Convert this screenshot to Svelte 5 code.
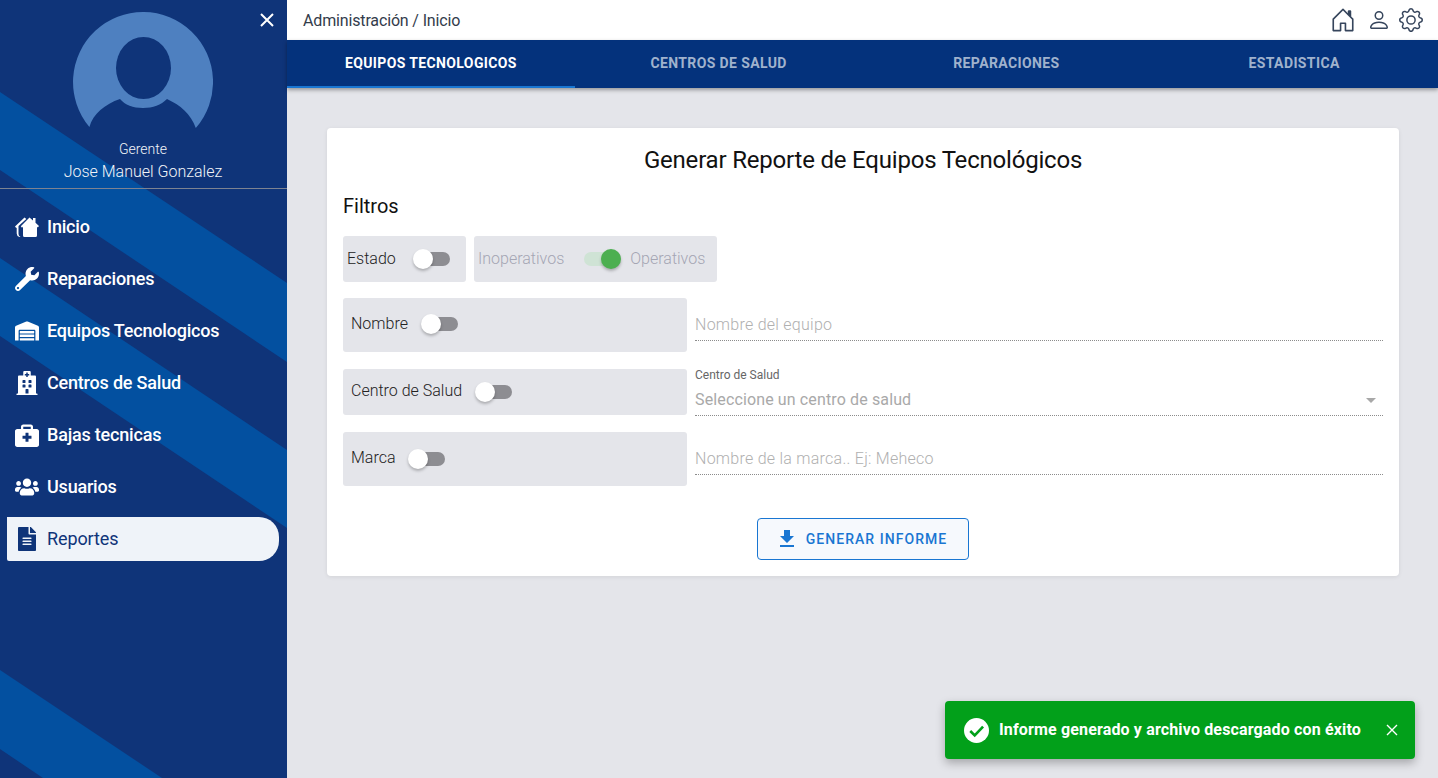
<script>
  const menu = [
    { label: 'Inicio', icon: 'home' },
    { label: 'Reparaciones', icon: 'wrench' },
    { label: 'Equipos Tecnologicos', icon: 'warehouse' },
    { label: 'Centros de Salud', icon: 'hospital' },
    { label: 'Bajas tecnicas', icon: 'medical' },
    { label: 'Usuarios', icon: 'users' },
    { label: 'Reportes', icon: 'file', active: true }
  ];

  const icons = {
    wrench: { box: '0 0 512 512', d: 'M507.73 109.1c-2.24-9.03-13.54-12.09-20.12-5.51l-74.36 74.36-67.88-11.31-11.31-67.88 74.36-74.36c6.62-6.62 3.43-17.9-5.66-20.16-47.38-11.74-99.55.91-136.58 37.93-39.64 39.64-50.55 97.1-34.05 147.2L18.74 402.76c-24.99 24.99-24.99 65.51 0 90.5 24.99 24.99 65.51 24.99 90.5 0l213.21-213.21c50.12 16.71 107.47 5.68 147.37-34.22 37.07-37.07 49.7-89.32 37.91-136.73zM64 472c-13.25 0-24-10.75-24-24 0-13.26 10.75-24 24-24s24 10.74 24 24c0 13.25-10.75 24-24 24z' },
    warehouse: { box: '0 0 640 512', d: 'M504 352H136.4c-4.4 0-8 3.6-8 8l-.1 48c0 4.4 3.6 8 8 8H504c4.4 0 8-3.6 8-8v-48c0-4.4-3.6-8-8-8zm0 96H136.1c-4.4 0-8 3.6-8 8l-.1 48c0 4.4 3.6 8 8 8h368c4.4 0 8-3.6 8-8v-48c0-4.4-3.6-8-8-8zm0-192H136.6c-4.4 0-8 3.6-8 8l-.1 48c0 4.4 3.6 8 8 8H504c4.4 0 8-3.6 8-8v-48c0-4.4-3.6-8-8-8zm106.5-139L338.4 3.7a48.15 48.15 0 0 0-36.9 0L29.5 117C11.7 124.5 0 141.9 0 161.3V504c0 4.4 3.6 8 8 8h80c4.4 0 8-3.6 8-8V256c0-17.6 14.6-32 32.6-32h382.8c18 0 32.6 14.4 32.6 32v248c0 4.4 3.6 8 8 8h80c4.4 0 8-3.6 8-8V161.3c0-19.4-11.7-36.8-29.5-44.3z' },
    hospital: { box: '0 0 448 512', d: 'M448 492v20H0v-20c0-6.627 5.373-12 12-12h20V120c0-13.255 10.745-24 24-24h88V24c0-13.255 10.745-24 24-24h112c13.255 0 24 10.745 24 24v72h88c13.255 0 24 10.745 24 24v360h20c6.627 0 12 5.373 12 12zM308 192h-40c-6.627 0-12 5.373-12 12v40c0 6.627 5.373 12 12 12h40c6.627 0 12-5.373 12-12v-40c0-6.627-5.373-12-12-12zm-168 64h40c6.627 0 12-5.373 12-12v-40c0-6.627-5.373-12-12-12h-40c-6.627 0-12 5.373-12 12v40c0 6.627 5.373 12 12 12zm104 128h-40c-6.627 0-12 5.373-12 12v84h64v-84c0-6.627-5.373-12-12-12zm64-96h-40c-6.627 0-12 5.373-12 12v40c0 6.627 5.373 12 12 12h40c6.627 0 12-5.373 12-12v-40c0-6.627-5.373-12-12-12zm-116 12c0-6.627-5.373-12-12-12h-40c-6.627 0-12 5.373-12 12v40c0 6.627 5.373 12 12 12h40c6.627 0 12-5.373 12-12v-40zM182 96h26v26a6 6 0 0 0 6 6h20a6 6 0 0 0 6-6V96h26a6 6 0 0 0 6-6V70a6 6 0 0 0-6-6h-26V38a6 6 0 0 0-6-6h-20a6 6 0 0 0-6 6v26h-26a6 6 0 0 0-6 6v20a6 6 0 0 0 6 6z' },
    medical: { box: '0 0 512 512', d: 'M464 128h-80V80c0-26.5-21.5-48-48-48H176c-26.5 0-48 21.5-48 48v48H48c-26.5 0-48 21.5-48 48v288c0 26.5 21.5 48 48 48h416c26.5 0 48-21.5 48-48V176c0-26.5-21.5-48-48-48zM176 80h160v48H176V80zm176 248c0 4.4-3.6 8-8 8h-56v56c0 4.4-3.6 8-8 8h-48c-4.4 0-8-3.6-8-8v-56h-56c-4.4 0-8-3.6-8-8v-48c0-4.4 3.6-8 8-8h56v-56c0-4.4 3.6-8 8-8h48c4.4 0 8 3.6 8 8v56h56c4.4 0 8 3.6 8 8v48z' },
    users: { box: '0 0 640 512', d: 'M96 224c35.3 0 64-28.7 64-64s-28.7-64-64-64-64 28.7-64 64 28.7 64 64 64zm448 0c35.3 0 64-28.7 64-64s-28.7-64-64-64-64 28.7-64 64 28.7 64 64 64zm32 32h-64c-17.6 0-33.5 7.1-45.1 18.6 40.3 22.1 68.9 62 75.1 109.4h66c17.7 0 32-14.3 32-32v-32c0-35.3-28.7-64-64-64zm-256 0c61.9 0 112-50.1 112-112S381.9 32 320 32 208 82.1 208 144s50.1 112 112 112zm76.8 32h-8.3c-20.8 10-43.9 16-68.5 16s-47.6-6-68.5-16h-8.3C179.6 288 128 339.6 128 403.2V432c0 26.5 21.5 48 48 48h288c26.5 0 48-21.5 48-48v-28.8c0-63.6-51.6-115.2-115.2-115.2zm-223.7-13.4C161.5 263.1 145.6 256 128 256H64c-35.3 0-64 28.7-64 64v32c0 17.7 14.3 32 32 32h65.9c6.3-47.4 34.9-87.3 75.2-109.4z' },
    file: { box: '0 0 384 512', d: 'M224 136V0H24C10.7 0 0 10.7 0 24v464c0 13.3 10.7 24 24 24h336c13.3 0 24-10.7 24-24V160H248c-13.2 0-24-10.8-24-24zm64 236c0 6.6-5.4 12-12 12H108c-6.6 0-12-5.4-12-12v-8c0-6.6 5.4-12 12-12h168c6.6 0 12 5.4 12 12v8zm0-64c0 6.6-5.4 12-12 12H108c-6.6 0-12-5.4-12-12v-8c0-6.6 5.4-12 12-12h168c6.6 0 12 5.4 12 12v8zm0-72v8c0 6.6-5.4 12-12 12H108c-6.6 0-12-5.4-12-12v-8c0-6.6 5.4-12 12-12h168c6.6 0 12 5.4 12 12zm96-114.1v6.1H256V0h6.1c6.4 0 12.5 2.5 17 7l97.9 98c4.5 4.5 7 10.6 7 16.9z' },
    home: { box: '0 0 24 22', d: 'M14.5 1.500 18 4.600V2H20.500V6.800L24 10 22.800 11.500 22 10.800V19.500Q22 21 20.500 21H9.500Q8 21 8 19.500V10.800L7 11.800 5.800 10.300ZM9.500 1.500 11.300 3 3.500 10V18Q3.500 20 5.500 21H4.500Q1.700 20 1.700 17.500V11.500L1.200 12 0 10.500Z' }
  };

  const tabs = ['Equipos Tecnologicos', 'Centros de Salud', 'Reparaciones', 'Estadistica'];
</script>

<div class="layout">
  <aside class="sidebar">
    <svg class="stripes" viewBox="0 0 287 778" aria-hidden="true">
      <path d="M0 92 287 283V362L0 170Z" />
      <path d="M0 258 287 450V528L0 336Z" />
      <path d="M0 670 162 778H43L0 749Z" />
    </svg>

    <button class="close" aria-label="Cerrar">
      <svg viewBox="0 0 16 16"><path d="M2 2 14 14M14 2 2 14" /></svg>
    </button>

    <div class="profile">
      <svg class="avatar" viewBox="0 0 140 140">
        <path class="avatar-bg" d="M16.400 115A70 70 0 1 1 122.800 116C118 102 107 93 94 87C88 93 80 96 70 96C60 96 52 93 47 87C32 92 20 102 16.400 115Z" />
        <ellipse class="avatar-head" cx="70.500" cy="56" rx="27.500" ry="31" />
      </svg>
      <div class="role">Gerente</div>
      <div class="name">Jose Manuel Gonzalez</div>
    </div>

    <nav class="menu">
      {#each menu as item}
        <div class="menu-item" class:active={item.active}>
          <span class="menu-icon">
            <svg viewBox={icons[item.icon].box}><path d={icons[item.icon].d} /></svg>
          </span>
          <span class="menu-label">{item.label}</span>
        </div>
      {/each}
    </nav>
  </aside>

  <div class="page">
    <header class="topbar">
      <span class="crumb">Administración / Inicio</span>
      <div class="top-icons">
        <svg class="t-home" viewBox="0 0 16 16"><path d="M8.354 1.146a.5.5 0 0 0-.708 0l-6 6A.5.5 0 0 0 1.500 7.500v7a.5.5 0 0 0 .5.5h4.500a.5.5 0 0 0 .5-.5v-4h2v4a.5.5 0 0 0 .5.5H14a.5.5 0 0 0 .5-.5v-7a.5.5 0 0 0-.146-.354L13 5.793V2.500a.5.5 0 0 0-.5-.5h-1a.5.5 0 0 0-.5.5v1.293L8.354 1.146ZM2.500 14V7.707l5.500-5.500 5.500 5.500V14H10v-4a.5.5 0 0 0-.5-.5h-3a.5.5 0 0 0-.5.5v4H2.500Z" /><path d="M11 2.500h2V6L11 4Z" /></svg>
        <svg viewBox="0 0 16 16"><path d="M8 8a3 3 0 1 0 0-6 3 3 0 0 0 0 6Zm2-3a2 2 0 1 1-4 0 2 2 0 0 1 4 0Zm4 8c0 1-1 1-1 1H3s-1 0-1-1 1-4 6-4 6 3 6 4Zm-1-.004c-.001-.246-.154-.986-.832-1.664C11.516 10.680 10.289 10 8 10c-2.290 0-3.516.680-4.168 1.332-.678.678-.830 1.418-.832 1.664h10Z" /></svg>
        <svg viewBox="0 0 16 16"><path d="M8 4.754a3.246 3.246 0 1 0 0 6.492 3.246 3.246 0 0 0 0-6.492zM5.754 8a2.246 2.246 0 1 1 4.492 0 2.246 2.246 0 0 1-4.492 0z" /><path d="M9.796 1.343c-.527-1.790-3.065-1.790-3.592 0l-.094.319a.873.873 0 0 1-1.255.520l-.292-.160c-1.640-.892-3.433.902-2.540 2.541l.159.292a.873.873 0 0 1-.520 1.255l-.319.094c-1.790.527-1.790 3.065 0 3.592l.319.094a.873.873 0 0 1 .520 1.255l-.160.292c-.892 1.640.901 3.434 2.541 2.540l.292-.159a.873.873 0 0 1 1.255.520l.094.319c.527 1.790 3.065 1.790 3.592 0l.094-.319a.873.873 0 0 1 1.255-.520l.292.160c1.640.893 3.434-.902 2.540-2.541l-.159-.292a.873.873 0 0 1 .520-1.255l.319-.094c1.790-.527 1.790-3.065 0-3.592l-.319-.094a.873.873 0 0 1-.520-1.255l.160-.292c.893-1.640-.902-3.433-2.541-2.540l-.292.159a.873.873 0 0 1-1.255-.520l-.094-.319zm-2.633.283c.246-.835 1.428-.835 1.674 0l.094.319a1.873 1.873 0 0 0 2.693 1.115l.291-.160c.764-.415 1.600.420 1.184 1.185l-.159.292a1.873 1.873 0 0 0 1.116 2.692l.318.094c.835.246.835 1.428 0 1.674l-.319.094a1.873 1.873 0 0 0-1.115 2.693l.160.291c.415.764-.420 1.600-1.185 1.184l-.291-.159a1.873 1.873 0 0 0-2.693 1.116l-.094.318c-.246.835-1.428.835-1.674 0l-.094-.319a1.873 1.873 0 0 0-2.692-1.115l-.292.160c-.764.415-1.600-.420-1.184-1.185l.159-.291A1.873 1.873 0 0 0 1.945 8.930l-.319-.094c-.835-.246-.835-1.428 0-1.674l.319-.094A1.873 1.873 0 0 0 3.060 4.377l-.160-.292c-.415-.764.420-1.600 1.185-1.184l.292.159a1.873 1.873 0 0 0 2.692-1.115l.094-.319z" /></svg>
      </div>
    </header>

    <div class="tabs">
      {#each tabs as tab, i}
        <div class="tab" class:on={i === 0}>{tab}</div>
      {/each}
    </div>

    <main class="content">
      <section class="card">
        <h1>Generar Reporte de Equipos Tecnológicos</h1>
        <h2>Filtros</h2>

        <div class="state-row">
          <div class="box box-state">
            <span class="lbl">Estado</span>
            <span class="switch"><span class="track"></span><span class="thumb"></span></span>
          </div>
          <div class="box box-choice">
            <span class="lbl">Inoperativos</span>
            <span class="switch"><span class="track on"></span><span class="thumb on"></span></span>
            <span class="lbl">Operativos</span>
          </div>
        </div>

        <div class="filter filter-tall">
          <div class="box box-wide">
            <span class="lbl">Nombre</span>
            <span class="switch"><span class="track"></span><span class="thumb"></span></span>
          </div>
          <div class="field"><span class="placeholder">Nombre del equipo</span></div>
        </div>

        <div class="filter filter-short">
          <div class="box box-wide box-low">
            <span class="lbl">Centro de Salud</span>
            <span class="switch"><span class="track"></span><span class="thumb"></span></span>
          </div>
          <div class="field-select">
            <span class="small-label">Centro de Salud</span>
            <div class="select-value">
              <span class="placeholder">Seleccione un centro de salud</span>
              <span class="caret"></span>
            </div>
          </div>
        </div>

        <div class="filter filter-tall">
          <div class="box box-wide box-low box-brand">
            <span class="lbl">Marca</span>
            <span class="switch"><span class="track"></span><span class="thumb"></span></span>
          </div>
          <div class="field"><span class="placeholder">Nombre de la marca.. Ej: Meheco</span></div>
        </div>

        <div class="actions">
          <button class="generate">
            <svg viewBox="0 0 24 24"><path d="M19 9h-4V3H9v6H5l7 7 7-7zM5 18v2h14v-2H5z" /></svg>
            Generar informe
          </button>
        </div>
      </section>
    </main>
  </div>

  <div class="toast">
    <svg class="toast-check" viewBox="0 0 24 24"><circle cx="12" cy="12" r="12" /><path d="M6 12.500 10.300 16.800 18.300 8.300" /></svg>
    <span class="toast-text">Informe generado y archivo descargado con éxito</span>
    <svg class="toast-x" viewBox="0 0 12 12"><path d="M1 1 11 11M11 1 1 11" /></svg>
  </div>
</div>

<style>
  :global(body) {
    margin: 0;
    font-family: Roboto, "Liberation Sans", sans-serif;
  }
  .layout {
    position: relative;
    display: flex;
    height: 778px;
    overflow: hidden;
    background: #e4e5ea;
  }

  .sidebar {
    position: relative;
    flex: 0 0 287px;
    background: #0f3479;
    color: #fff;
    overflow: hidden;
  }
  .stripes {
    position: absolute;
    inset: 0;
    width: 287px;
    height: 778px;
  }
  .stripes path {
    fill: #0350a0;
  }
  .close {
    position: absolute;
    top: 12px;
    right: 12px;
    width: 16px;
    height: 16px;
    padding: 0;
    border: 0;
    background: none;
  }
  .close svg {
    display: block;
  }
  .close path {
    stroke: #fff;
    stroke-width: 2;
    fill: none;
  }
  .profile {
    position: relative;
    height: 189px;
    padding: 12px 1px 0 0;
    box-sizing: border-box;
    border-bottom: 1px solid #7d8391;
    text-align: center;
  }
  .avatar {
    display: block;
    width: 140px;
    height: 140px;
    margin-left: 73px;
  }
  .avatar-bg {
    fill: #4e80c0;
  }
  .avatar-head {
    fill: #0f3479;
  }
  .role {
    margin-top: -11px;
    font-size: 14px;
    line-height: 16px;
    font-weight: 300;
    color: #f2f4f8;
  }
  .name {
    margin-top: 4px;
    font-size: 16px;
    line-height: 22px;
    font-weight: 300;
    color: #f2f4f8;
  }
  .menu {
    position: relative;
    display: flex;
    flex-direction: column;
    gap: 8px;
    padding: 16px 8px 0 7px;
  }
  .menu-item {
    display: flex;
    align-items: center;
    height: 44px;
    font-size: 18px;
    font-weight: 500;
    letter-spacing: -0.2px;
    border-radius: 0 20px 20px 2px;
  }
  .menu-item.active {
    background: #eff3f9;
    color: #0f3479;
    font-weight: 400;
    letter-spacing: -0.1px;
  }
  .menu-label {
    margin-bottom: 2px;
  }
  .menu-icon {
    display: flex;
    justify-content: center;
    align-items: center;
    width: 40px;
    flex: none;
  }
  .menu-icon svg {
    display: block;
    width: 24px;
    height: 24px;
    fill: #fff;
  }
  .menu-item.active .menu-icon svg {
    fill: #0f3479;
  }

  .page {
    flex: 1;
    display: flex;
    flex-direction: column;
    min-width: 0;
  }
  .topbar {
    display: flex;
    align-items: center;
    justify-content: space-between;
    height: 40px;
    padding: 0 15px 0 16px;
    background: #fff;
    color: #333c4b;
    font-size: 16px;
    font-weight: 400;
  }
  .crumb {
    letter-spacing: -0.15px;
  }
  .top-icons {
    display: flex;
    align-items: center;
    gap: 8px;
  }
  .top-icons svg {
    display: block;
    width: 24px;
    height: 24px;
    fill: #36455c;
  }
  .top-icons .t-home {
    width: 26px;
    height: 26px;
    margin-right: 3px;
  }
  .tabs {
    position: relative;
    display: grid;
    grid-template-columns: repeat(4, 1fr);
    height: 48px;
    background: #04327c;
    box-shadow: 0 2px 4px rgba(0, 0, 0, .35);
  }
  .tab {
    display: flex;
    align-items: center;
    justify-content: center;
    box-sizing: border-box;
    padding-bottom: 2px;
    font-size: 14px;
    font-weight: 700;
    text-transform: uppercase;
    letter-spacing: 0.38px;
    color: #a0b2cd;
  }
  .tab.on {
    color: #fff;
    padding-bottom: 0;
    border-bottom: 2px solid #1976d2;
  }

  .content {
    padding: 40px 39px 0 40px;
  }
  .card {
    height: 448px;
    box-sizing: border-box;
    padding: 16px;
    background: #fff;
    border-radius: 4px;
    box-shadow: 0 1px 4px rgba(0, 0, 0, .08);
    color: #333;
  }
  h1 {
    margin: 0;
    font-size: 24px;
    line-height: 32px;
    font-weight: 400;
    letter-spacing: -0.2px;
    text-align: center;
    color: #111;
  }
  h2 {
    margin: 16px 0 0;
    font-size: 20px;
    line-height: 28px;
    font-weight: 400;
    color: #111;
  }
  .box {
    display: flex;
    align-items: center;
    background: #e4e5ea;
    border-radius: 3px;
    font-size: 16px;
    font-weight: 300;
    color: #222;
  }
  .lbl {
    margin-bottom: 2px;
  }
  .state-row {
    display: flex;
    gap: 8px;
    margin-top: 16px;
  }
  .box-state {
    width: 123px;
    height: 46px;
    padding-left: 4px;
    box-sizing: border-box;
  }
  .box-choice {
    width: 243px;
    height: 46px;
    padding-left: 4px;
    box-sizing: border-box;
    color: #a4a6b4;
  }
  .switch {
    position: relative;
    display: block;
    flex: none;
    width: 37px;
    height: 20px;
    margin: 0 12px 0 17px;
  }
  .box-wide .switch {
    margin-left: 13px;
  }
  .box-brand .switch {
    margin-left: 12px;
  }
  .track {
    position: absolute;
    top: 3px;
    left: 3px;
    width: 34px;
    height: 14px;
    border-radius: 7px;
    background: #8d8d92;
  }
  .track.on {
    background: #cfe3d5;
  }
  .thumb {
    position: absolute;
    top: 0;
    left: 0;
    width: 20px;
    height: 20px;
    border-radius: 50%;
    background: #fff;
    box-shadow: 0 2px 3px rgba(0, 0, 0, .25);
  }
  .thumb.on {
    left: 20px;
    background: #4caf50;
  }
  .filter {
    display: grid;
    grid-template-columns: 344px 1fr;
    column-gap: 8px;
    margin-top: 16px;
  }
  .filter-short {
    margin-top: 17px;
  }
  .box-wide {
    padding-left: 8px;
    padding-bottom: 2px;
    box-sizing: border-box;
  }
  .box-low {
    padding-bottom: 0;
  }
  .box-low .lbl {
    margin-bottom: 4px;
  }
  .filter-tall .box-wide {
    height: 54px;
  }
  .filter-short .box-wide {
    height: 46px;
  }
  .field {
    height: 43px;
    display: flex;
    align-items: flex-end;
    padding-bottom: 4px;
    box-sizing: border-box;
    border-bottom: 1px dotted #8c8c8c;
  }
  .field-select {
    height: 47px;
    box-sizing: border-box;
    border-bottom: 1px dotted #8c8c8c;
  }
  .placeholder {
    font-size: 16px;
    line-height: 22px;
    font-weight: 300;
    letter-spacing: 0.26px;
    color: #b0b0b0;
  }
  .field-select .placeholder {
    font-weight: 400;
    color: #a9a9a9;
    letter-spacing: 0.13px;
  }
  .small-label {
    display: block;
    font-size: 12px;
    line-height: 12px;
    color: #666;
  }
  .select-value {
    display: flex;
    align-items: center;
    justify-content: space-between;
    margin-top: 8px;
    padding-right: 7px;
  }
  .caret {
    width: 0;
    height: 0;
    border-left: 5px solid transparent;
    border-right: 5px solid transparent;
    border-top: 5px solid #a8a8a8;
  }
  .actions {
    display: flex;
    justify-content: center;
    margin-top: 32px;
  }
  .generate {
    display: flex;
    align-items: center;
    justify-content: center;
    gap: 7px;
    width: 212px;
    height: 42px;
    padding: 0 4px 0 0;
    background: #f6f9fd;
    border: 1px solid #1976d2;
    border-radius: 4px;
    color: #1976d2;
    font-family: inherit;
    font-size: 14px;
    font-weight: 500;
    letter-spacing: 1.05px;
    text-transform: uppercase;
  }
  .generate svg {
    width: 24px;
    height: 24px;
    fill: #1976d2;
  }

  .toast {
    position: absolute;
    left: 945px;
    top: 701px;
    width: 470px;
    height: 58px;
    display: flex;
    align-items: center;
    box-sizing: border-box;
    padding-left: 19px;
    background: #02a01a;
    border-radius: 4px;
    box-shadow: 0 4px 10px rgba(0, 0, 0, .28);
    color: #fff;
    font-size: 16px;
    font-weight: 700;
  }
  .toast-check {
    width: 25px;
    height: 25px;
    flex: none;
    margin-right: 10px;
  }
  .toast-check circle {
    fill: #fff;
  }
  .toast-check path {
    fill: none;
    stroke: #02a01a;
    stroke-width: 2.500;
  }
  .toast-text {
    white-space: nowrap;
    letter-spacing: 0.15px;
    margin-bottom: 2px;
  }
  .toast-x {
    position: absolute;
    right: 17px;
    top: 23px;
    width: 12px;
    height: 12px;
    fill: none;
    stroke: #fff;
    stroke-width: 1.400;
  }
</style>
